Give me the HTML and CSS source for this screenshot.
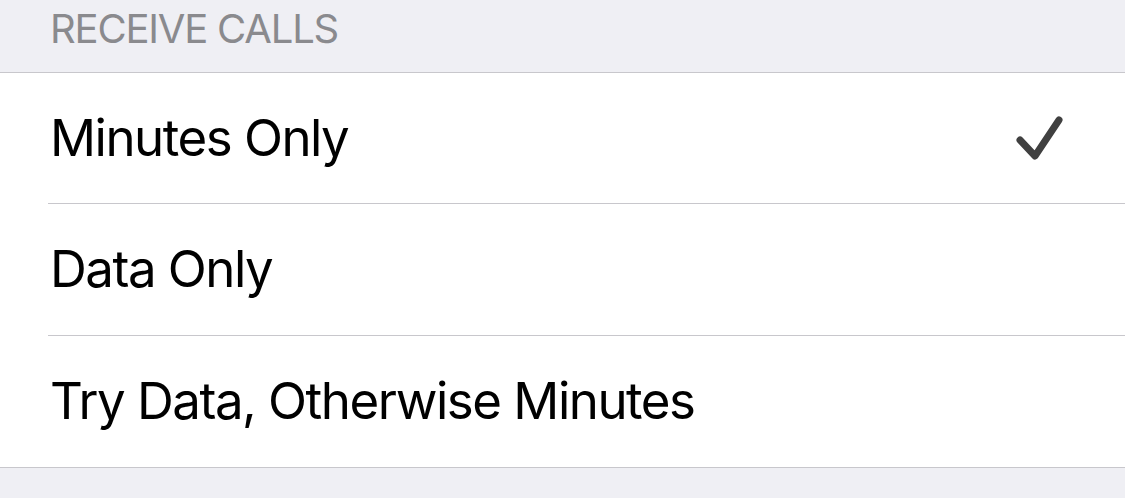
FILE: index.html
```html
<!DOCTYPE html>
<html lang="en">
<head>
    <meta charset="UTF-8">
    <meta name="viewport" content="width=device-width, initial-scale=1.0">
    <title>Receive Calls</title>
    <link rel="stylesheet" href="styles.css">
</head>
<body>

<div class="section-header">RECEIVE CALLS</div>

<div class="list">
    <div class="row">
        <div class="row-inner">
            <span class="label">Minutes Only</span>
            <svg class="check" width="48" height="48" viewBox="0 0 48 48">
                <path d="M5 26 L20 42 L44 6" fill="none" stroke="#404040" stroke-width="7" stroke-linecap="round" stroke-linejoin="round"/>
            </svg>
        </div>
    </div>
    <div class="row">
        <div class="row-inner">
            <span class="label">Data Only</span>
        </div>
    </div>
    <div class="row">
        <div class="row-inner">
            <span class="label">Try Data, Otherwise Minutes</span>
        </div>
    </div>
</div>

</body>
</html>
```

FILE: styles.css
```css
* {
    margin: 0;
    padding: 0;
    box-sizing: border-box;
}

body {
    font-family: Inter, 'Noto Sans', sans-serif;
    background-color: #efeff4;
    height: 498px;
    overflow: hidden;
}

.section-header {
    height: 72px;
    padding: 5px 0 0 50px;
    font-size: 40px;
    line-height: 48px;
    letter-spacing: -1.2px;
    color: #8a8a8e;
}

.list {
    background: white;
    border-top: 1px solid #c8c7cc;
    border-bottom: 1px solid #c8c7cc;
}

.row {
    padding-left: 48px;
}

.row-inner {
    height: 131px;
    display: flex;
    align-items: center;
    justify-content: space-between;
    padding: 0 62px 2px 2px;
    border-bottom: 1px solid #c8c7cc;
}

.row:nth-child(2) .row-inner {
    height: 132px;
}

.row:last-child .row-inner {
    height: 131px;
    border-bottom: none;
}

.label {
    font-size: 51px;
    letter-spacing: -1.5px;
    color: #000;
}

.check {
    margin-top: 2px;
}
```
